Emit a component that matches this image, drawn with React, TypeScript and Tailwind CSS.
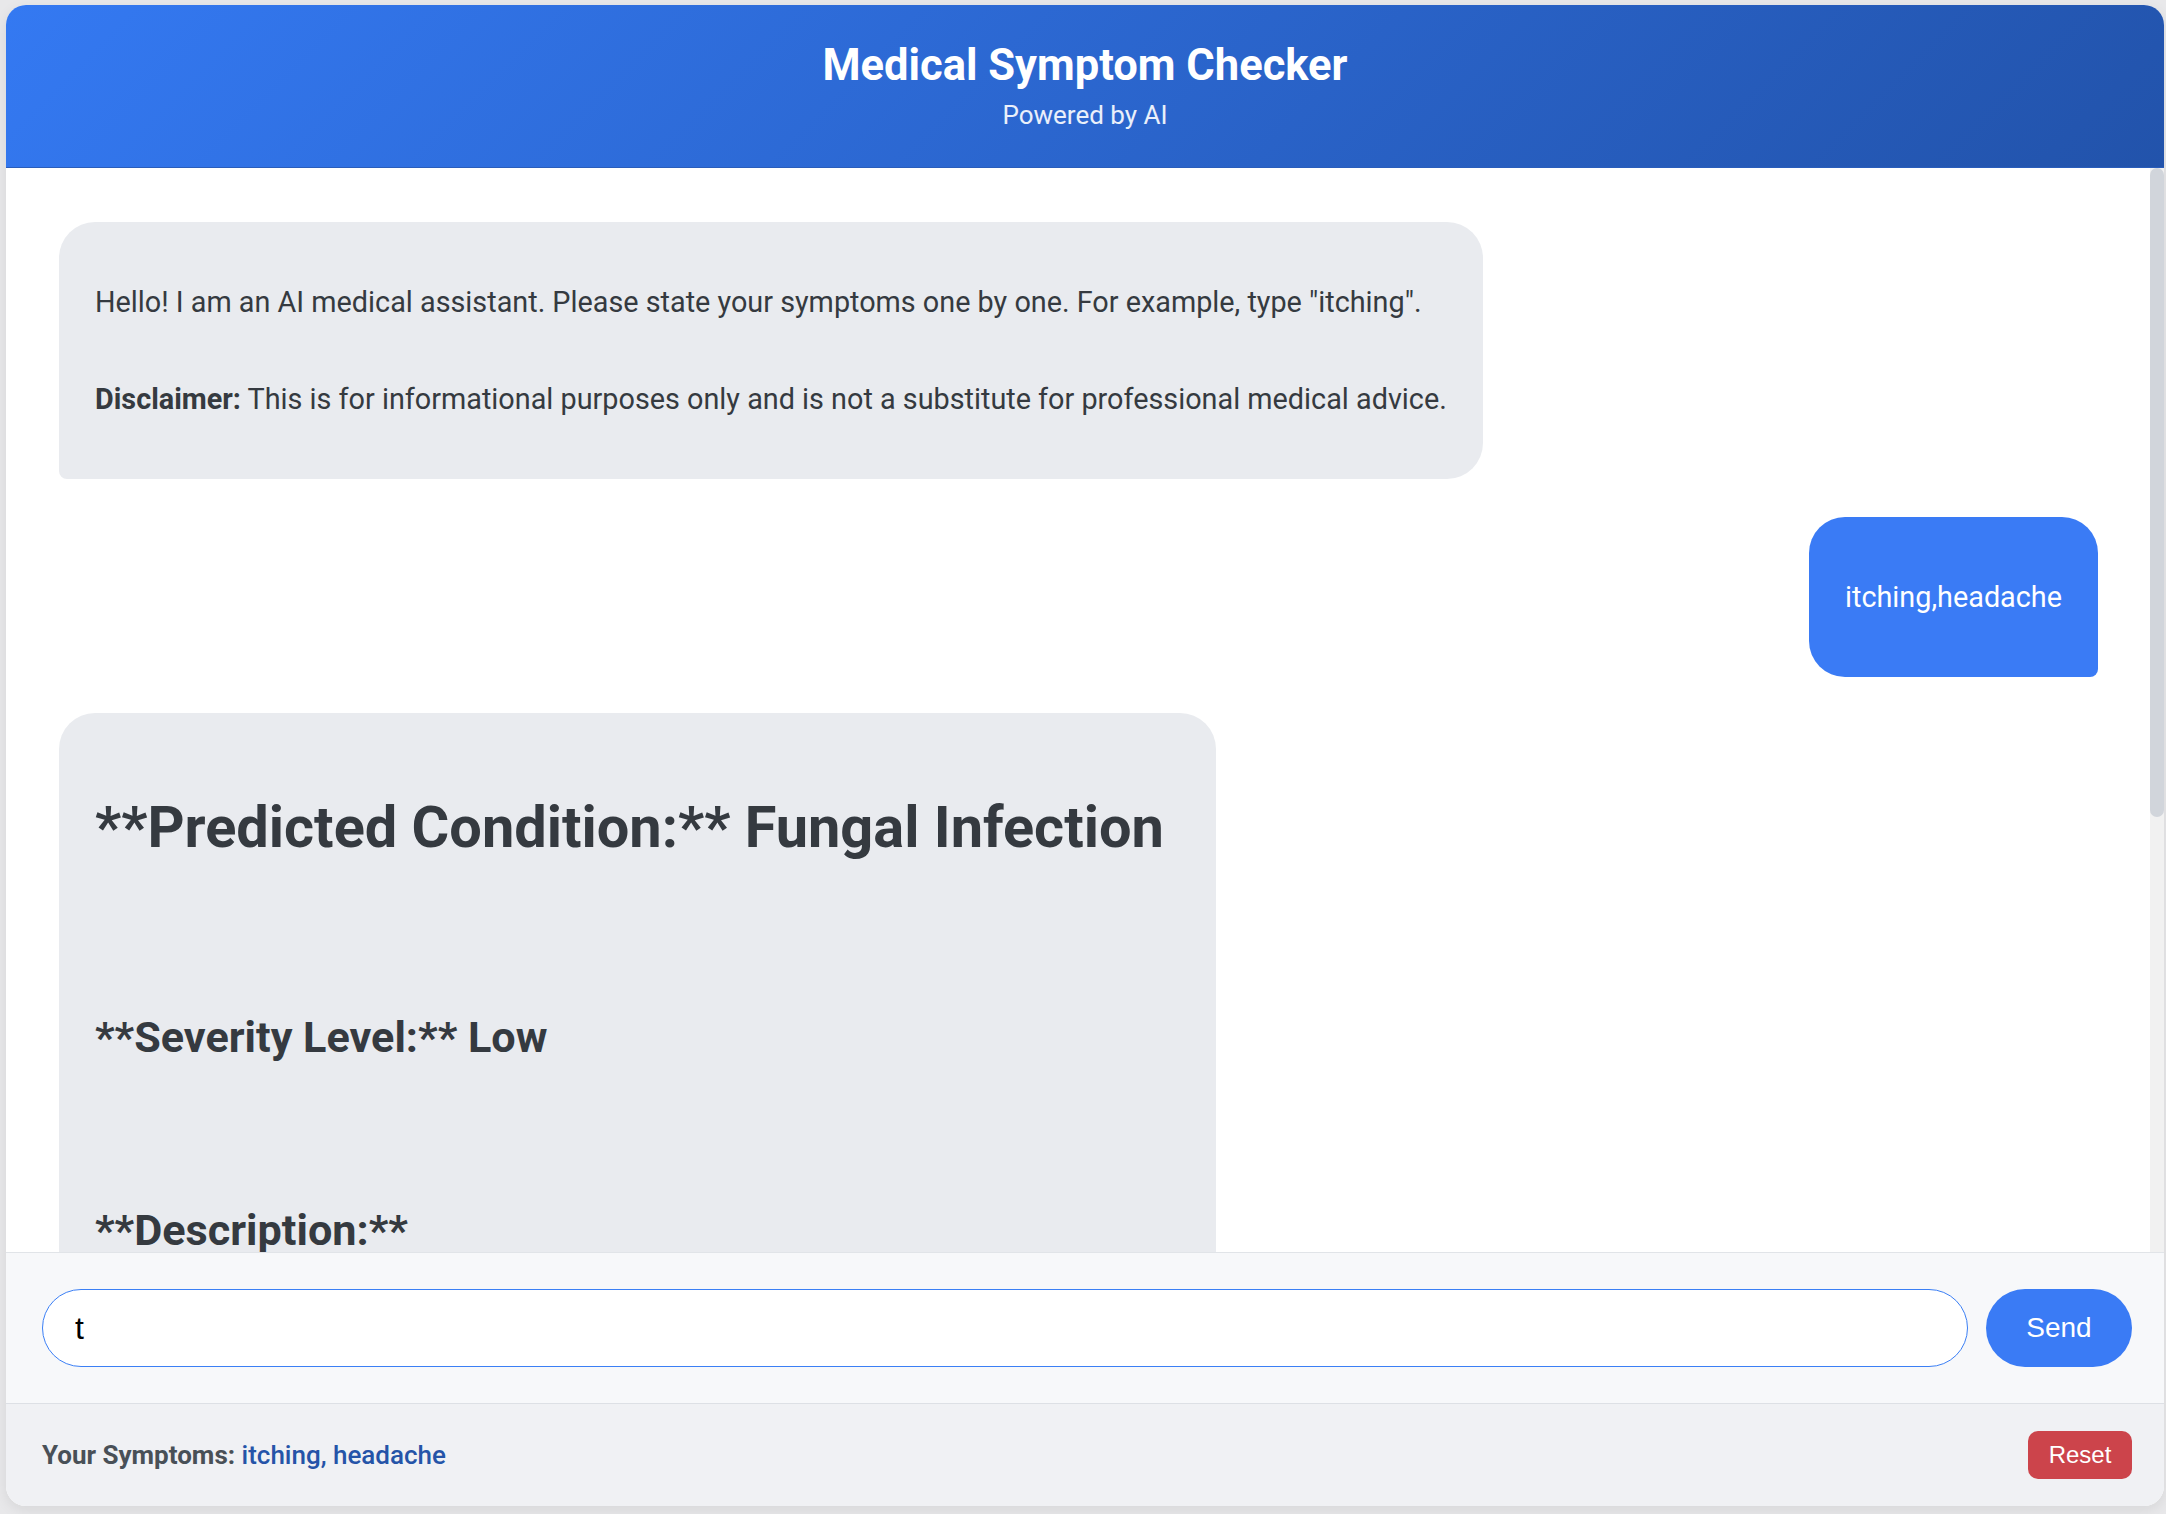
import React, { useState } from 'react';

const Bot: React.FC<{ children: React.ReactNode; className?: string }> = ({ children, className }) => (
    <div className={`self-start bg-[#e9ebef] text-[#353a40] rounded-[36px] rounded-bl-[8px] px-[36px] ${className ?? ''}`}>
        {children}
    </div>
);

const App: React.FC = () => {
    const [text, setText] = useState('t');

    return (
        <div className="min-h-screen bg-[#e8e8ea] pt-[5px] pl-[6px] pr-[2px] font-['Roboto','Noto_Sans',sans-serif]">
            <div className="h-[1501px] flex flex-col rounded-[20px] overflow-hidden bg-white shadow-[0_4px_14px_rgba(0,0,0,0.08)]">

                {/* Header */}
                <div className="shrink-0 bg-linear-[135deg,#3479f2,#2253ab] text-white text-center pt-[34px] pb-[33px] border-b border-[#2a5dba]">
                    <h1 className="text-[43.5px] leading-[53px] font-bold">Medical Symptom Checker</h1>
                    <p className="mt-[4px] text-[26px] leading-[38px] text-white/90">Powered by AI</p>
                </div>

                {/* Chat */}
                <div className="relative flex-1 min-h-0">
                    <div className="h-full overflow-y-auto flex flex-col pt-[54px] pb-[54px] pl-[53px] pr-[66px] text-[28.8px]">
                        <Bot className="w-fit max-w-[72%] py-[24px] flex flex-col">
                            <p className="mt-[32px] leading-[48px]">
                                Hello! I am an AI medical assistant. Please state your symptoms one by one. For example, type "itching".
                            </p>
                            <p className="mt-[49px] mb-[32px] leading-[48px]">
                                <strong className="font-bold">Disclaimer:</strong> This is for informational purposes only and is not a substitute for professional medical advice.
                            </p>
                        </Bot>

                        <div className="self-end mt-[38px] bg-[#3a7bf5] text-white rounded-[36px] rounded-br-[8px] px-[36px] py-[24px]">
                            <p className="my-[32px] leading-[48px]">itching,headache</p>
                        </div>

                        <Bot className="w-[1157px] mt-[36px] pt-[24px] pb-[52px] flex flex-col shrink-0">
                            <h2 className="mt-[56px] text-[57.7px] leading-[68px] font-bold whitespace-nowrap">**Predicted Condition:** Fungal Infection</h2>
                            <h3 className="mt-[150px] text-[43.2px] leading-[53px] font-bold">**Severity Level:** Low</h3>
                            <h3 className="mt-[140px] text-[43.2px] leading-[53px] font-bold">**Description:**</h3>
                            <p className="mt-[40px] leading-[48px]">A fungal infection of the skin, often itchy.</p>
                            <h3 className="mt-[140px] text-[43.2px] leading-[53px] font-bold">**Precautions:**</h3>
                            <ul className="mt-[40px] leading-[48px]">
                                <li>1. bath twice</li>
                                <li>2. use detol or neem in bathing water</li>
                                <li>3. keep infected area dry</li>
                                <li>4. use clean cloths</li>
                            </ul>
                            <p className="mt-[56px] leading-[48px]">Please consult a doctor for an accurate diagnosis.</p>
                        </Bot>
                    </div>

                    {/* scrollbar */}
                    <div className="absolute top-0 right-0 bottom-0 w-[14px] bg-[#f1f1f1]">
                        <div className="h-[649px] rounded-full bg-[#d1d5db]" />
                    </div>
                </div>

                {/* Input */}
                <div className="shrink-0 border-t border-[#e1e4e8] bg-[#f7f8fa] pt-[36px] pb-[36px] pl-[36px] pr-[32px] flex items-center gap-[18px]">
                    <input
                        autoFocus
                        value={text}
                        onChange={(e) => setText(e.target.value)}
                        className="flex-1 h-[78px] rounded-full border border-[#3b7ff5] bg-white pl-[32px] pr-[32px] text-[32px] text-black outline-none font-['Liberation_Sans',Arial,sans-serif]"
                    />
                    <button className="w-[146px] h-[78px] rounded-full bg-[#3a7bf5] text-white text-[28px] font-['Liberation_Sans',Arial,sans-serif]">
                        Send
                    </button>
                </div>

                {/* Footer */}
                <div className="shrink-0 border-t border-[#dde0e5] bg-[#f0f1f4] py-[27px] pl-[36px] pr-[32px] flex items-center justify-between">
                    <div className="text-[26px]">
                        <span className="font-bold text-[#495057]">Your Symptoms: </span>
                        <span className="font-medium text-[#2554a8]">itching, headache</span>
                    </div>
                    <button className="w-[104px] h-[48px] rounded-[10px] bg-[#cc444b] text-white text-[24px] font-['Liberation_Sans',Arial,sans-serif]">
                        Reset
                    </button>
                </div>
            </div>
        </div>
    );
};

export default App;
